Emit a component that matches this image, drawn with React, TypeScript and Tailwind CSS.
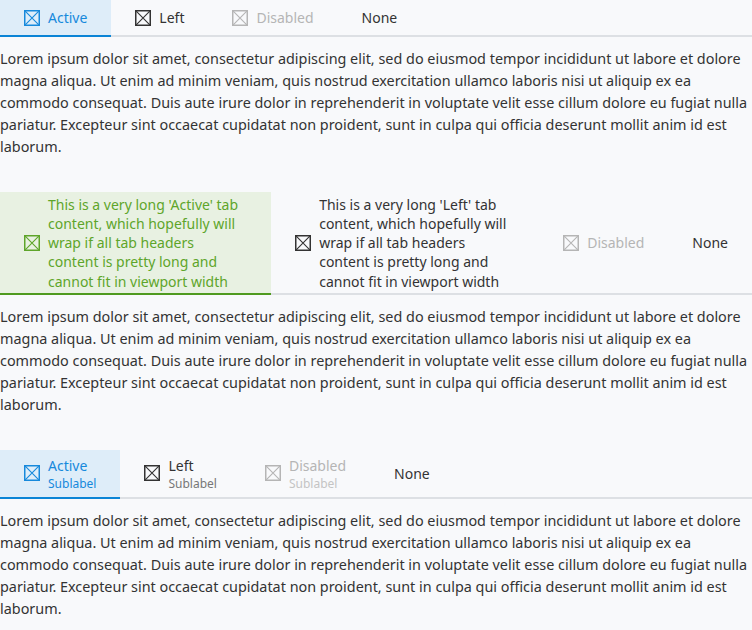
import React from "react";

const Icon = () => (
  <svg width="16" height="16" viewBox="0 0 16 16" fill="none" stroke="currentColor" className="shrink-0">
    <rect x="0.75" y="0.75" width="14.5" height="14.5" strokeWidth="1.5" />
    <path d="M1.2 1.2L14.8 14.8M14.8 1.2L1.2 14.8" strokeWidth="1.1" />
  </svg>
);

const LOREM =
  "Lorem ipsum dolor sit amet, consectetur adipiscing elit, sed do eiusmod tempor incididunt ut labore et dolore magna aliqua. Ut enim ad minim veniam, quis nostrud exercitation ullamco laboris nisi ut aliquip ex ea commodo consequat. Duis aute irure dolor in reprehenderit in voluptate velit esse cillum dolore eu fugiat nulla pariatur. Excepteur sint occaecat cupidatat non proident, sunt in culpa qui officia deserunt mollit anim id est laborum.";

type Variant = "blue" | "green" | "normal" | "disabled" | "none";

function tabClass(v: Variant) {
  switch (v) {
    case "blue":
      return "bg-[#deedf9] text-[#1689dc] border-[#0a84d6]";
    case "green":
      return "bg-[#e8f1e2] text-[#5ea52a] border-[#4f9a1f]";
    case "disabled":
      return "text-[#b5b5b5] border-transparent";
    default:
      return "text-[#333] border-transparent";
  }
}

function Tab({
  v,
  label,
  sub,
  icon = true,
  pad,
}: {
  v: Variant;
  label: string;
  sub?: string;
  icon?: boolean;
  pad: string;
}) {
  const subColor =
    v === "blue" ? "text-[#1689dc]" : v === "disabled" ? "text-[#c4c4c4]" : "text-[#777]";
  return (
    <div
      className={`flex items-center gap-2 px-6 min-h-[37px] border-b-2 -mb-[2px] ${pad} ${tabClass(v)}`}
    >
      {icon && <Icon />}
      <div className="flex flex-col">
        <span className="text-[14px] leading-[19.25px]">{label}</span>
        {sub && <span className={`text-[12px] leading-[15px] ${subColor}`}>{sub}</span>}
      </div>
    </div>
  );
}

function TabBar({ children }: { children: React.ReactNode }) {
  return <div className="flex border-b-2 border-[#dde0e4]">{children}</div>;
}

function Para({ last = false }: { last?: boolean }) {
  return (
    <p className={`text-[14.4px] leading-[22px] text-[#333] pt-[11px] ${last ? "" : "pb-[34px]"}`}>
      {LOREM}
    </p>
  );
}

export default function App() {
  const long = (w: string) =>
    `This is a very long '${w}' tab content, which hopefully will wrap if all tab headers content is pretty long and cannot fit in viewport width`;
  return (
    <div
      className="min-h-[630px] w-[752px] bg-[#f8f9fb]"
      style={{ fontFamily: '"Noto Sans", "Open Sans", sans-serif' }}
    >
      <TabBar>
        <Tab v="blue" label="Active" pad="py-[2.5px]" />
        <Tab v="normal" label="Left" pad="py-[2.5px]" />
        <Tab v="disabled" label="Disabled" pad="py-[2.5px]" />
        <Tab v="none" label="None" icon={false} pad="py-[2.5px]" />
      </TabBar>
      <Para />
      <TabBar>
        <Tab v="green" label={long("Active")} pad="py-[2.5px]" />
        <Tab v="normal" label={long("Left")} pad="py-[2.5px]" />
        <Tab v="disabled" label="Disabled" pad="py-[2.5px]" />
        <Tab v="none" label="None" icon={false} pad="py-[2.5px]" />
      </TabBar>
      <Para />
      <TabBar>
        <Tab v="blue" label="Active" sub="Sublabel" pad="py-[6px]" />
        <Tab v="normal" label="Left" sub="Sublabel" pad="py-[6px]" />
        <Tab v="disabled" label="Disabled" sub="Sublabel" pad="py-[6px]" />
        <Tab v="none" label="None" icon={false} pad="py-[6px]" />
      </TabBar>
      <Para last />
    </div>
  );
}
